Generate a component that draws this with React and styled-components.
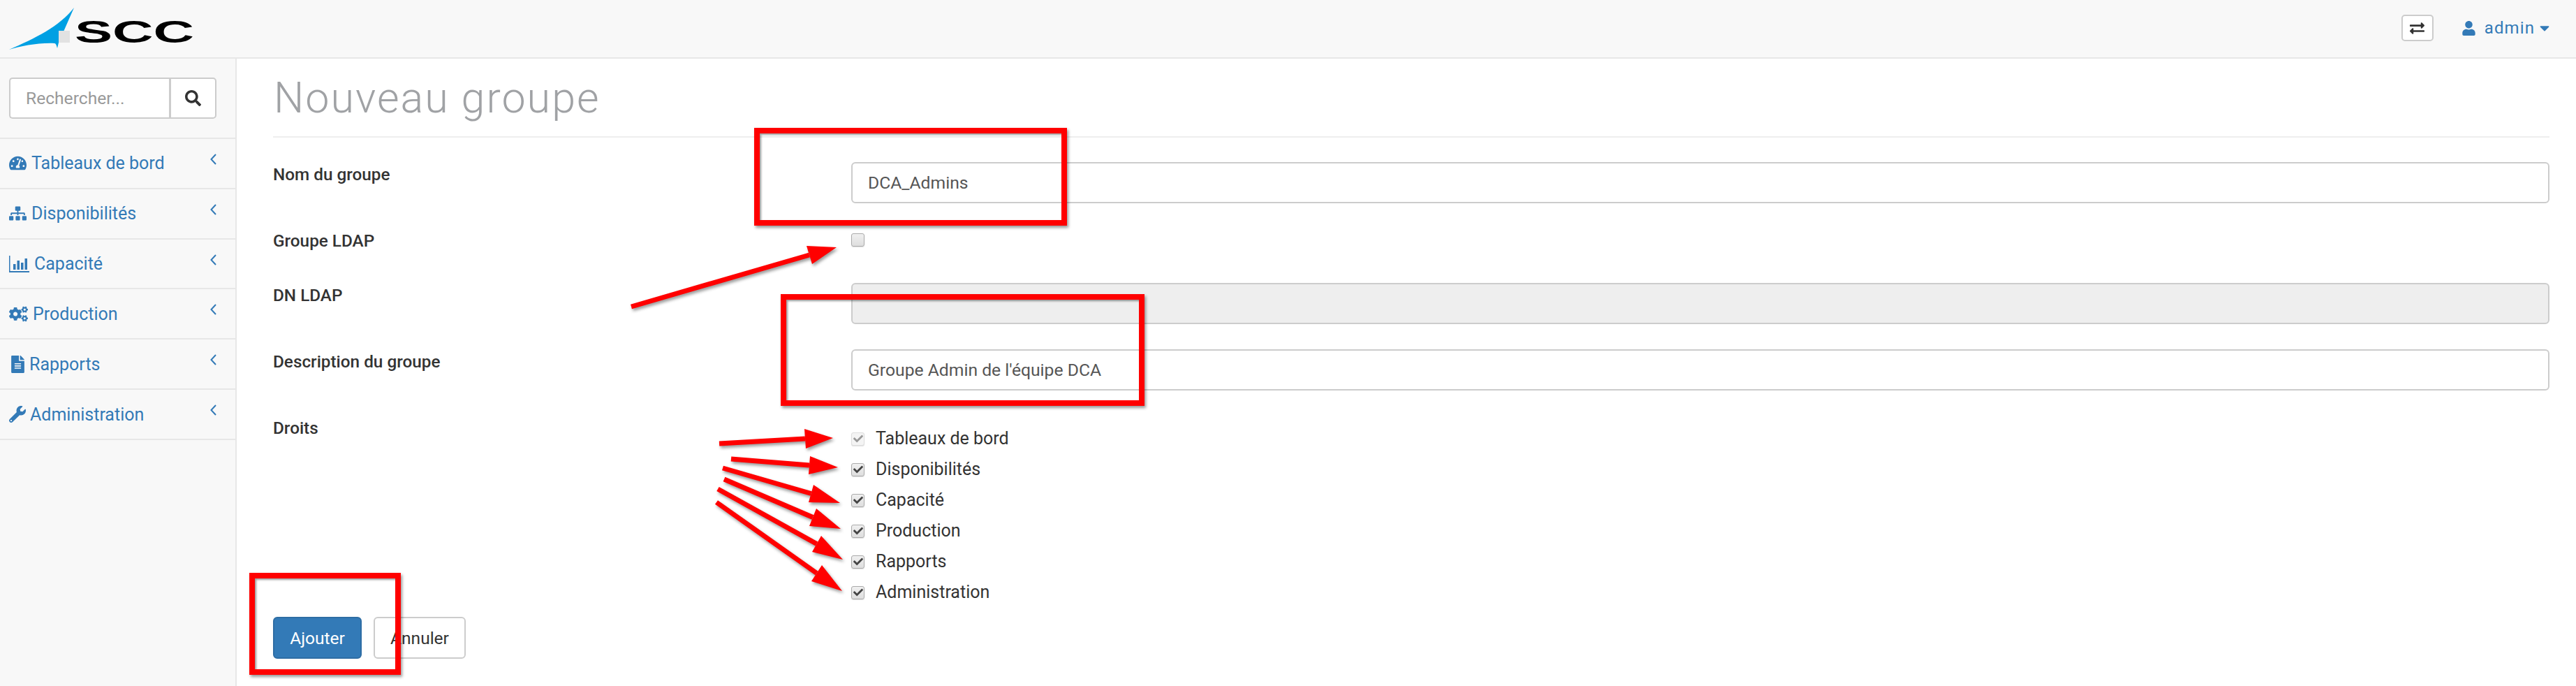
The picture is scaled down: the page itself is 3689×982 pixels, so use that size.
import React from 'react';
import styled, { createGlobalStyle } from 'styled-components';
import {
  FaTachometerAlt, FaSitemap, FaCogs, FaFileAlt, FaWrench, FaSearch,
  FaExchangeAlt, FaUser, FaCaretDown, FaCheck,
} from 'react-icons/fa';

const BLUE = '#337ab7';

const GlobalStyle = createGlobalStyle`
  html, body { margin: 0; padding: 0; background: #fff; overflow: hidden; }
  * { box-sizing: border-box; }
  body { font-family: Roboto, "Open Sans", sans-serif; font-size: 25px; color: #333; }
`;

const Page = styled.div`
  position: relative;
  width: 3689px;
  height: 982px;
  overflow: hidden;
`;

const Navbar = styled.header`
  height: 84px;
  background: #f8f8f8;
  border-bottom: 2px solid #e7e7e7;
  display: flex;
  align-items: center;
  padding-right: 38px;
`;

const Logo = styled.svg`
  width: 290px;
  height: 82px;
  flex: none;
`;

const Toggle = styled.button`
  margin-left: auto;
  width: 46px;
  height: 38px;
  margin-top: -2px;
  background: #fff;
  border: 2px solid #ccc;
  border-radius: 5px;
  color: #333;
  font-size: 21px;
  padding: 0;
  display: flex;
  align-items: center;
  justify-content: center;
`;

const UserMenu = styled.a`
  margin-left: 40px;
  display: flex;
  align-items: center;
  color: ${BLUE};
  font-size: 24px;
  letter-spacing: 1.1px;
  margin-top: -2px;
  svg:first-child { font-size: 21px; margin-right: 12px; }
  svg:last-child { font-size: 22px; margin-left: 3px; margin-right: -4px; }
`;

const Body = styled.div`
  display: flex;
  height: 898px;
`;

const Sidebar = styled.aside`
  width: 339px;
  flex: none;
  background: #f8f8f8;
  border-right: 2px solid #e7e7e7;
`;

const SearchBar = styled.div`
  height: 115px;
  padding: 27px 0 0 13px;
  border-bottom: 2px solid #e7e7e7;
  display: flex;
  align-items: flex-start;
`;

const SearchInput = styled.input`
  width: 229px;
  height: 59px;
  border: 2px solid #ccc;
  border-right: 0;
  border-radius: 5px 0 0 5px;
  padding: 0 22px;
  font: 24.6px Roboto, sans-serif;
  background: #fff;
  &::placeholder { color: #999; opacity: 1; }
`;

const SearchButton = styled.button`
  width: 68px;
  height: 59px;
  border: 2px solid #ccc;
  border-left-width: 3px;
  border-radius: 0 5px 5px 0;
  background: #fff;
  color: #333;
  font-size: 23px;
  padding: 0;
  display: flex;
  align-items: center;
  justify-content: center;
`;

const MenuItem = styled.a`
  height: 71.83px;
  border-bottom: 2px solid #e7e7e7;
  display: flex;
  align-items: center;
  padding: 0 27px 0 13px;
  color: ${BLUE};
`;

const MenuIcon = styled.span`
  width: ${p => p.$width}px;
  flex: none;
  display: flex;
  align-items: center;
  font-size: ${p => p.$size}px;
  svg { flex: none; }
`;

const Chevron = styled.svg`
  width: 9px;
  height: 16px;
  margin-left: auto;
  margin-bottom: 12px;
  fill: none;
  stroke: ${BLUE};
  stroke-width: 2;
`;

const Main = styled.main`
  flex: 1;
  padding: 0 38px 0 52px;
`;

const PageHeader = styled.div`
  height: 113px;
  border-bottom: 2px solid #eee;
  margin-bottom: 35px;
  display: flex;
  align-items: center;
`;

const Title = styled.h1`
  margin: 0 0 0 1px;
  font-size: 61px;
  font-weight: 300;
  color: #a0a2a5;
  letter-spacing: 2px;
`;

const FormRow = styled.div`
  display: grid;
  grid-template-columns: 828px 1fr;
  margin-bottom: 36px;
  min-height: ${p => p.$minHeight || 59}px;
`;

const Label = styled.label`
  font-weight: 500;
  font-size: 24.3px;
  line-height: 36px;
  color: #333;
`;

const TextField = styled.input`
  width: 100%;
  height: 59px;
  border: 2px solid #ccc;
  border-radius: 6px;
  padding: 0 22px;
  font: 24.7px Roboto, sans-serif;
  color: #555;
  background: ${p => (p.disabled ? '#eee' : '#fff')};
`;

const Box = styled.span`
  width: 19px;
  height: 19px;
  flex: none;
  display: flex;
  align-items: center;
  justify-content: center;
  border: 1px solid ${p => (p.$disabled ? '#ddd' : '#aaa')};
  border-radius: 3px;
  background: ${p => (p.$disabled ? '#f4f4f4' : 'linear-gradient(#f0f0f0, #dedede)')};
  color: ${p => (p.$disabled ? '#999' : '#444')};
  font-size: 14px;
  box-shadow: 0 1px 1px rgba(0, 0, 0, 0.12);
`;

const LoneBox = styled(Box)`
  margin-top: 7px;
`;

const CheckList = styled.div`
  padding-top: 11px;
`;

const CheckRow = styled.div`
  height: 44px;
  display: flex;
  align-items: center;
  gap: 16px;
  color: #333;
  line-height: 46px;
`;

const Actions = styled.div`
  display: flex;
  gap: 17px;
  margin-top: -23px;
`;

const Button = styled.button`
  height: 60px;
  width: ${p => p.$width}px;
  border-radius: 6px;
  border: 2px solid ${p => (p.$primary ? '#2e6da4' : '#ccc')};
  background: ${p => (p.$primary ? BLUE : '#fff')};
  color: ${p => (p.$primary ? '#fff' : '#333')};
  font: 24.5px Roboto, sans-serif;
  padding: 0;
`;

const RedBox = styled.div`
  position: absolute;
  left: ${p => p.$x}px;
  top: ${p => p.$y}px;
  width: ${p => p.$w}px;
  height: ${p => p.$h}px;
  border: 8px solid #f00;
  box-shadow: 2px 3px 4px rgba(0, 0, 0, 0.4), inset 2px 2px 3px rgba(0, 0, 0, 0.4);
`;

const ArrowLayer = styled.svg`
  position: absolute;
  left: 0;
  top: 0;
  width: 3689px;
  height: 982px;
  pointer-events: none;
  filter: drop-shadow(2px 3px 2px rgba(0, 0, 0, 0.4));
`;

const menu = [
  { label: 'Tableaux de bord', icon: <FaTachometerAlt />, width: 32, size: 25 },
  { label: 'Disponibilités', icon: <FaSitemap />, width: 32, size: 25 },
  {
    label: 'Capacité',
    width: 36,
    icon: (
      <svg width="29" height="24" viewBox="0 0 29 24" fill={BLUE}>
        <path d="M0 0h1.5v22H29v2H0z" />
        <rect x="6" y="12" width="3.5" height="8" />
        <rect x="11.5" y="7" width="3.5" height="13" />
        <rect x="17" y="10" width="3.5" height="10" />
        <rect x="22.5" y="4" width="3.5" height="16" />
      </svg>
    ),
  },
  { label: 'Production', icon: <FaCogs />, width: 34, size: 27 },
  { label: 'Rapports', icon: <FaFileAlt />, width: 29, size: 25 },
  { label: 'Administration', icon: <FaWrench />, width: 30, size: 24 },
];

const rights = [
  { label: 'Tableaux de bord', disabled: true },
  { label: 'Disponibilités' },
  { label: 'Capacité' },
  { label: 'Production' },
  { label: 'Rapports' },
  { label: 'Administration' },
];

const redBoxes = [
  { x: 1080, y: 183, w: 448, h: 140 },
  { x: 1118, y: 421, w: 521, h: 160 },
  { x: 357, y: 820, w: 217, h: 146 },
];

// tail, head corner, tip, head corner
const arrows = [
  [[904, 439], [1155, 352], [1198, 354], [1163, 378]],
  [[1030, 635], [1152, 614], [1193, 627], [1154, 642]],
  [[1047, 657], [1160, 653], [1200, 669], [1158, 679]],
  [[1035, 670], [1165, 694], [1203, 720], [1158, 719]],
  [[1037, 686], [1169, 728], [1204, 757], [1159, 753]],
  [[1028, 700], [1176, 767], [1207, 801], [1163, 790]],
  [[1026, 719], [1177, 809], [1206, 846], [1162, 832]],
];

const Arrow = ({ points }) => {
  const [tail, a, tip, b] = points;
  return (
    <g>
      <line
        x1={tail[0]} y1={tail[1]}
        x2={(a[0] + b[0]) / 2} y2={(a[1] + b[1]) / 2}
        stroke="#f00" strokeWidth="7"
      />
      <polygon points={[a, tip, b].map(p => p.join(',')).join(' ')} fill="#f00" />
    </g>
  );
};

const App = () => (
  <Page>
    <GlobalStyle />
    <Navbar>
      <Logo viewBox="0 0 290 82">
        <path d="M13 71C50 55 85 38 106 11L84 61L82 69C81 65 80 62 78 62C55 61 30 66 13 71Z" fill="#00a0e3" />
        <rect x="84" y="44" width="16" height="17" fill="#e2e2e2" />
        <text
          x="107" y="61" textLength="171" lengthAdjust="spacingAndGlyphs"
          fontFamily="Liberation Sans" fontWeight="700" fontSize="45" fill="#000"
        >
          SCC
        </text>
      </Logo>
      <Toggle><FaExchangeAlt /></Toggle>
      <UserMenu>
        <FaUser />
        admin
        <FaCaretDown />
      </UserMenu>
    </Navbar>
    <Body>
      <Sidebar>
        <SearchBar>
          <SearchInput placeholder="Rechercher..." readOnly />
          <SearchButton><FaSearch /></SearchButton>
        </SearchBar>
        {menu.map(item => (
          <MenuItem key={item.label}>
            <MenuIcon $width={item.width} $size={item.size}>{item.icon}</MenuIcon>
            {item.label}
            <Chevron viewBox="0 0 9 16"><path d="M8 1L1.5 8L8 15" /></Chevron>
          </MenuItem>
        ))}
      </Sidebar>
      <Main>
        <PageHeader><Title>Nouveau groupe</Title></PageHeader>
        <FormRow>
          <Label>Nom du groupe</Label>
          <TextField value="DCA_Admins" readOnly />
        </FormRow>
        <FormRow $minHeight={42}>
          <Label>Groupe LDAP</Label>
          <LoneBox />
        </FormRow>
        <FormRow>
          <Label>DN LDAP</Label>
          <TextField disabled />
        </FormRow>
        <FormRow>
          <Label>Description du groupe</Label>
          <TextField value="Groupe Admin de l'équipe DCA" readOnly />
        </FormRow>
        <FormRow>
          <Label>Droits</Label>
          <CheckList>
            {rights.map(right => (
              <CheckRow key={right.label}>
                <Box $disabled={right.disabled}><FaCheck /></Box>
                {right.label}
              </CheckRow>
            ))}
          </CheckList>
        </FormRow>
        <Actions>
          <Button $primary $width={127}>Ajouter</Button>
          <Button $width={132}>Annuler</Button>
        </Actions>
      </Main>
    </Body>
    {redBoxes.map(box => (
      <RedBox key={box.x} $x={box.x} $y={box.y} $w={box.w} $h={box.h} />
    ))}
    <ArrowLayer viewBox="0 0 3689 982">
      {arrows.map(points => <Arrow key={points[0].join()} points={points} />)}
    </ArrowLayer>
  </Page>
);

export default App;
